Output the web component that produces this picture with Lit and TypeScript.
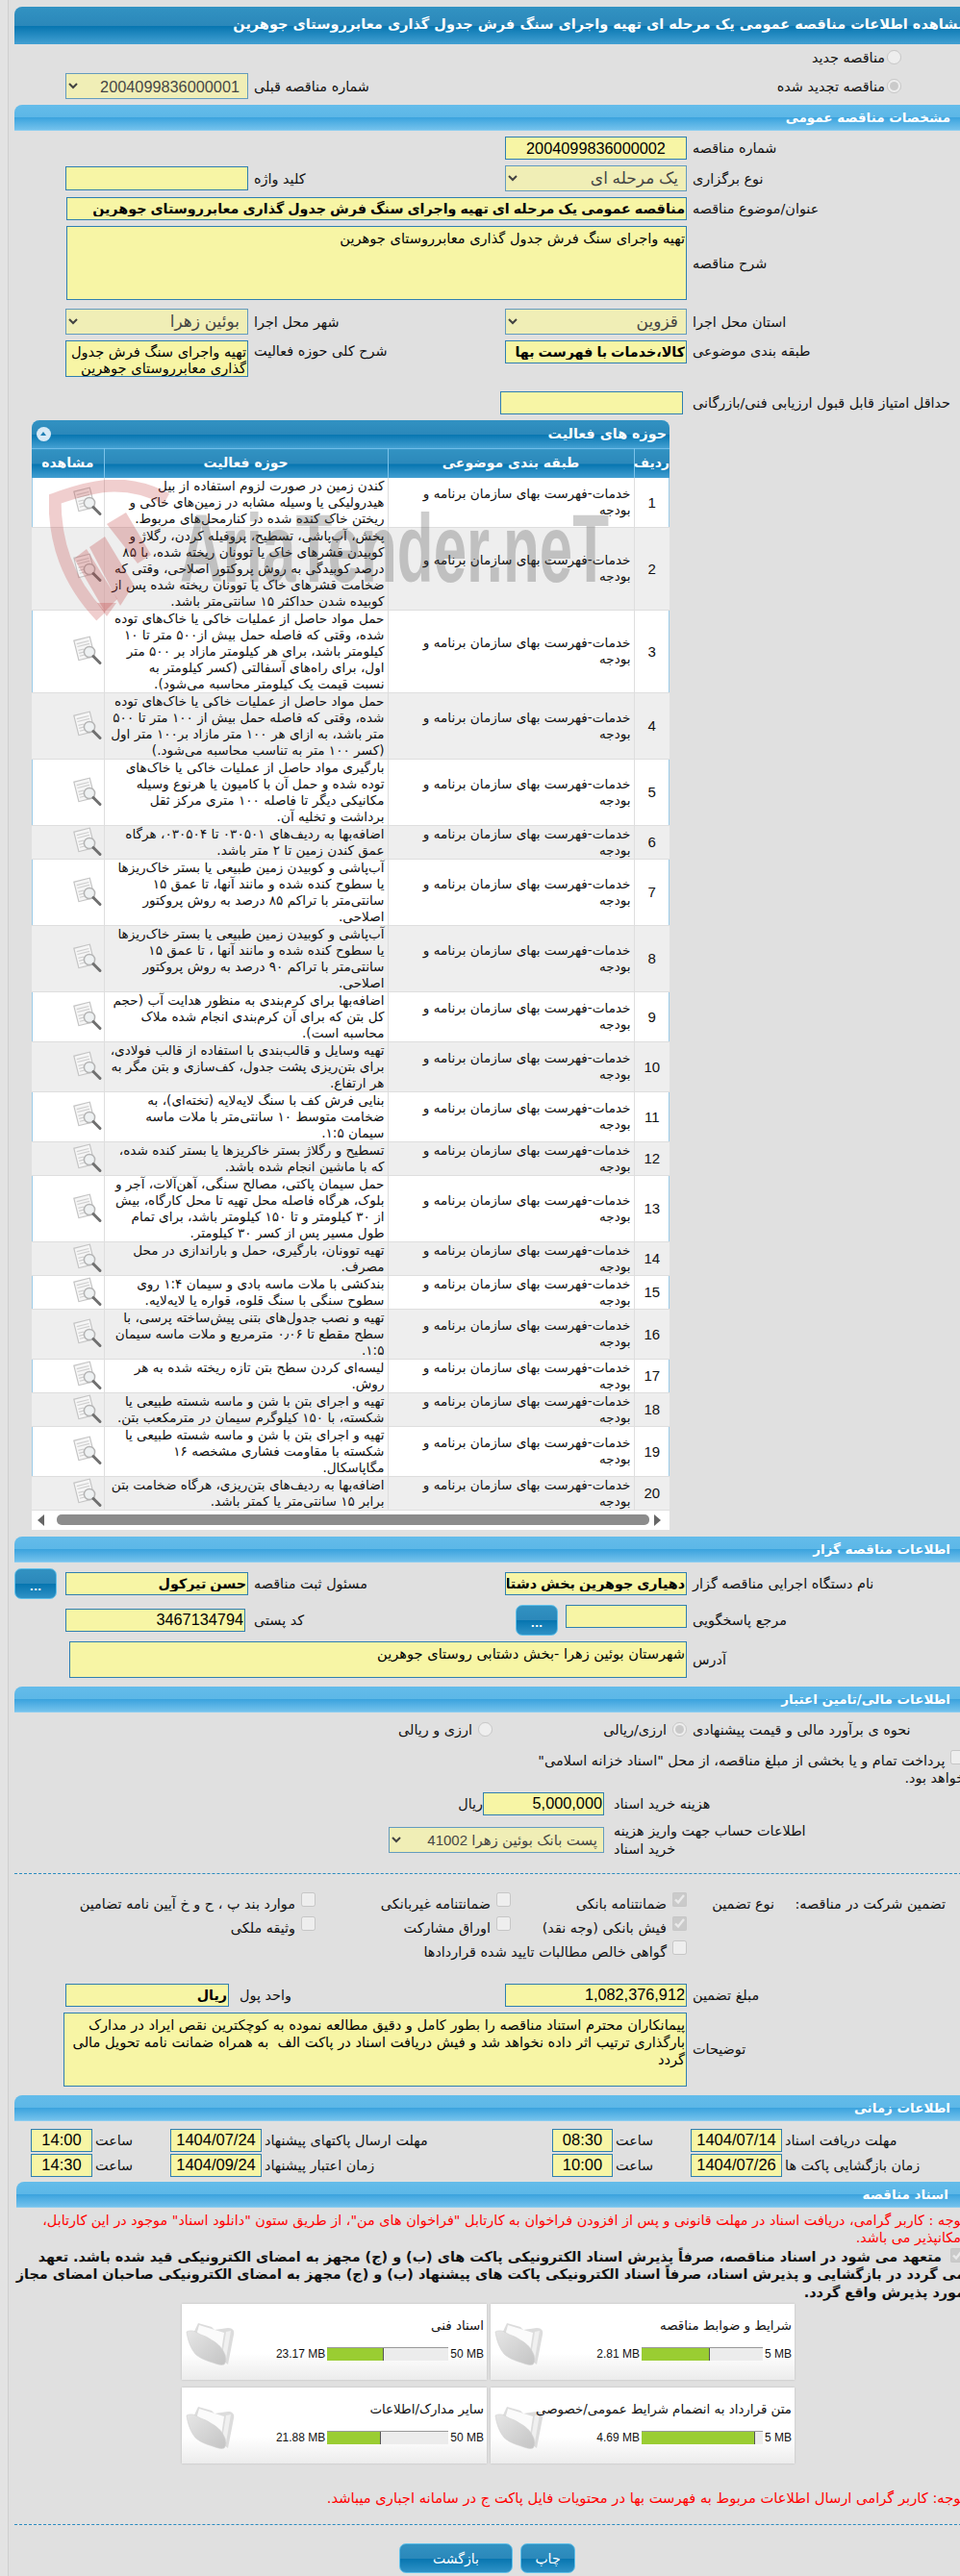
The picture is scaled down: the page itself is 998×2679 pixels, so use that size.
import { LitElement, html, css, svg } from "lit";
import { customElement } from "lit/decorators.js";

const ROWS: string[][] = [
  ["کندن زمین در صورت لزوم استفاده از بیل", "هیدرولیکی یا  وسیله مشابه در زمین‌های خاکی و", "ریختن خاک کنده شده در کنارمحل‌های مربوط."],
  ["پخش، آب‌پاشی، تسطیح، پروفیله کردن، رگلاژ و", "کوبیدن قشرهای خاک یا توونان ریخته شده، با ۸۵", "درصد کوبیدگی به روش پروکتور اصلاحی، وقتی که", "ضخامت قشرهای خاک یا توونان ریخته شده پس از", "کوبیده شدن حداکثر ۱۵ سانتی‌متر باشد."],
  ["حمل مواد حاصل از عملیات خاکی یا خاک‌های توده", "شده، وقتی  که فاصله حمل بیش از۵۰۰ متر تا ۱۰", "کیلومتر باشد، برای هر کیلومتر مازاد بر ۵۰۰  متر", "اول، برای راه‌های آسفالتی (کسر کیلومتر به", "نسبت قیمت یک کیلومتر محاسبه می‌شود)."],
  ["حمل مواد حاصل از عملیات خاکی یا خاک‌های توده", "شده، وقتی که فاصله حمل بیش از ۱۰۰ متر تا ۵۰۰", "متر باشد، به ازای هر ۱۰۰ متر مازاد بر۱۰۰ متر اول", "(کسر ۱۰۰ متر به تناسب محاسبه می‌شود.)"],
  ["بارگیری مواد حاصل از عملیات خاکی یا خاک‌های", "توده شده و  حمل آن با کامیون یا هرنوع وسیله", "مکانیکی دیگر تا فاصله ۱۰۰ متری مرکز ثقل", "برداشت و تخلیه آن."],
  ["اضافه‌بها به ردیف‌های ۰۳۰۵۰۱ تا ۰۳۰۵۰۴، هرگاه", "عمق کندن  زمین تا ۲ متر باشد."],
  ["آب‌پاشی و کوبیدن زمین طبیعی یا بستر خاک‌ریزها", "یا سطوح کنده شده و مانند آنها، تا عمق ۱۵", "سانتی‌متر با تراکم ۸۵ درصد به روش پروکتور", "اصلاحی."],
  ["آب‌پاشی و کوبیدن زمین طبیعی یا بستر خاک‌ریزها", "یا سطوح کنده شده و مانند آنها ، تا عمق ۱۵", "سانتی‌متر با تراکم ۹۰ درصد به روش پروکتور", "اصلاحی."],
  ["اضافه‌بها برای کرم‌بندی به منظور هدایت آب (حجم", "کل بتن که برای آن کرم‌بندی انجام شده ملاک", "محاسبه است)."],
  ["تهیه وسایل و قالب‌بندی با استفاده از قالب فولادی،", "برای بتن‌ریزی پشت جدول، کف‌سازی و بتن مگر به", "هر ارتفاع."],
  ["بنایی فرش کف با سنگ لایه‌لایه (تخته‌ای)، به", "ضخامت متوسط ۱۰ سانتی‌متر با ملات ماسه", "سیمان ۱:۵."],
  ["تسطیح و رگلاژ بستر خاکریزها یا بستر کنده شده،", "که با ماشین انجام شده باشد."],
  ["حمل سیمان پاکتی، مصالح سنگی، آهن‌آلات، آجر و", "بلوک، هرگاه فاصله محل تهیه تا محل کارگاه، بیش", "از ۳۰ کیلومتر و تا ۱۵۰ کیلومتر باشد، برای تمام", "طول مسیر پس از کسر ۳۰ کیلومتر."],
  ["تهیه توونان، بارگیری، حمل و باراندازی در محل", "مصرف."],
  ["بندکشی با ملات ماسه بادی و سیمان ۱:۴ روی", "سطوح سنگی با سنگ قلوه، قواره یا لایه‌لایه."],
  ["تهیه و نصب جدول‌های بتنی پیش‌ساخته پرسی، با", "سطح مقطع تا ۰٫۰۶ مترمربع و ملات ماسه سیمان", "۱:۵."],
  ["لیسه‌ای کردن سطح بتن تازه ریخته شده به هر", "روش."],
  ["تهیه و اجرای بتن با شن و ماسه شسته طبیعی یا", "شکسته، با ۱۵۰ کیلوگرم سیمان در مترمکعب بتن."],
  ["تهیه و اجرای بتن با شن و ماسه شسته طبیعی یا", "شکسته با مقاومت فشاری مشخصه ۱۶", "مگاپاسکال."],
  ["اضافه‌بها به ردیف‌های بتن‌ریزی، هرگاه ضخامت بتن", "برابر ۱۵ سانتی‌متر یا کمتر باشد."],
];

const CARDS = [
  { t: "اسناد فنی", v: "23.17 MB", m: "50 MB", p: 46.3 },
  { t: "شرایط و ضوابط مناقصه", v: "2.81 MB", m: "5 MB", p: 56.2 },
  { t: "سایر مدارک/اطلاعات", v: "21.88 MB", m: "50 MB", p: 43.8 },
  { t: "متن قرارداد به انضمام شرایط عمومی/خصوصی", v: "4.69 MB", m: "5 MB", p: 93.8 },
];

const viewIcon = svg`<svg class="vi" viewBox="0 0 32 32" width="32" height="32">
  <g transform="rotate(-14 12 13)">
    <rect x="4" y="3" width="17" height="21" fill="#f6f6f6" stroke="#c4c4c4" stroke-width="1.2"/>
    <path d="M6 7h13M6 10h13M6 14h6M6 17h6M6 20h9" stroke="#cfcfcf" stroke-width="1.2"/>
  </g>
  <circle cx="18" cy="17" r="5.6" fill="#eef1f2" stroke="#b4b4b4" stroke-width="1.5"/>
  <path d="M22 21.5l7 7" stroke="#707070" stroke-width="3" stroke-linecap="round"/>
</svg>`;

const folderIcon = svg`<svg class="fo" viewBox="0 0 53 48" width="53" height="48">
  <defs><linearGradient id="fg" x1="0" y1="0" x2="1" y2="1"><stop offset="0" stop-color="#e6e6e6"/><stop offset="1" stop-color="#c4c4c4"/></linearGradient></defs>
  <path d="M14 3l14 4 3 3 14-2c5 0 7 3 6 7l-6 31-38-28z" fill="#dcdcdc"/>
  <path d="M15 5l26 8-4 26L12 16z" fill="#fbfbfb"/>
  <path d="M43 12l5-1-5 29-4-3z" fill="#f0f0f0"/>
  <path d="M2 12c4-2 8-1 11 1 4 3 9 3 14 7 5 3 11 6 15 16 1 3 1 8-1 10-3 1-7 0-12-2-7-2-14-5-18-9C6 29 3 20 2 12z" fill="url(#fg)" stroke="#d0d0d0" stroke-width=".6"/>
</svg>`;

const watermark = svg`<svg class="wm" viewBox="0 0 600 150" width="600" height="150">
  <g fill="none" stroke="#c23a3a" stroke-opacity=".25" stroke-width="13">
    <path d="M122 20C100 8 82 6 68 6 48 6 28 12 6 20c0 44 12 84 48 122"/>
  </g>
  <g fill="#c23a3a" fill-opacity=".27">
    <path d="M60 46l20-12 26 44-14 9z"/>
    <path d="M42 70l16-11 30 50-14 22z"/>
    <path d="M26 82l13-10 32 52-13 13z"/>
    <path d="M50 128h20l-10 14z"/>
  </g>
  <text x="136" y="106" font-family="Liberation Sans, sans-serif" font-weight="700" font-size="100" textLength="446" lengthAdjust="spacingAndGlyphs" fill="#3c3c3c" fill-opacity=".26">AriaTender.neT</text>
</svg>`;

@customElement("app-root")
export class AppRoot extends LitElement {
  static styles = css`
    :host { display: block; width: 998px; height: 2679px; overflow: hidden; background: #e0e0e0; }
    .page {
      width: 1010px; height: 2679px; box-sizing: border-box; position: relative;
      font-family: "DejaVu Sans", sans-serif; font-size: 14.4px; color: #111; direction: rtl;
      background: linear-gradient(to right, #e3e3e3 0, #e3e3e3 8px, #cfcfcf 8px, #cfcfcf 9px, #e0e0e0 9px);
      padding-top: 7px;
    }
    .main { margin-left: 15px; }
    .title, .sec, .ph, .th {
      color: #fff; font-weight: 700;
    }
    .title {
      height: 39px; box-sizing: border-box; line-height: 37px; padding-right: 5px; white-space: nowrap; font-size: 14.5px;
      border-radius: 8px 8px 0 0; background: linear-gradient(#3292c2 0, #2b88ba 50%, #0675b0 51%, #43a0d2 100%);
    }
    .sec {
      height: 27px; box-sizing: border-box; line-height: 26px; padding-right: 22px; font-size: 13.5px; white-space: nowrap;
      border-radius: 8px 8px 0 0; background: linear-gradient(#64bcea 0, #5cb7e7 50%, #3ba3de 51%, #74c2ec 100%);
      border-bottom: 1px solid #8ccdf0;
    }
    .sec.s1 { margin-top: 6px; }
    .sec.s4 { margin-left: 2px; padding-right: 24px; }
    .radio-a { height: 15px; margin-top: 6px; padding-right: 73px; display: flex; gap: 2px; align-items: center; }
    input[type="radio"], input[type="checkbox"] { width: 15px; height: 15px; margin: 0; flex: none; }
    .row {
      display: grid; direction: ltr; padding-left: 53px; margin-top: 6px; align-items: center;
      grid-template-columns: 190px 267px 189px 1fr;
    }
    .row.btns { padding-left: 0; grid-template-columns: 53px 190px 267px 189px 1fr; }
    .row.top { align-items: start; }
    .l { direction: rtl; text-align: left; padding-left: 6px; white-space: nowrap; line-height: 18px; }
    .l.t6 { padding-top: 2px; }
    .rad-r { grid-column: 3 / 5; direction: rtl; padding-right: 73px; display: flex; gap: 2px; align-items: center; }
    .f {
      box-sizing: border-box; height: 24px; width: 100%; border: 1px solid #2f7fb0; background: #f7f5a5; color: #000;
      font-family: "Liberation Sans", "DejaVu Sans", sans-serif; font-size: 16.3px; direction: rtl; padding: 0 1px; margin: 0;
      border-radius: 0; outline: none; display: block;
    }
    .f.h25 { height: 25px; }
    .f.num { text-align: center; }
    .f.b { font-weight: 700; font-size: 14.3px; }
    select.f { height: 27px; padding: 0 4px; font-size: 17px; }
    select.f.n { font-size: 16.3px; }
    select.f.acct { font-size: 15px; padding: 0 2px; }
    textarea.f { resize: none; font-size: 14.6px; line-height: 18px; padding: 3px 1px; overflow: hidden; white-space: pre-wrap; font-family: "DejaVu Sans", sans-serif; }
    textarea.f.tight { line-height: 17px; padding-top: 2px; }
    .span3 { grid-column: 1 / 4; }
    .ml1 { margin-left: 1px; width: calc(100% - 1px); }
    .ml-5 { margin-left: -5px; width: 190px; }
    .ml4 { margin-left: 4px; width: calc(100% - 4px); }
    .ml-2 { margin-left: -2px; width: calc(100% + 2px); }
    .h77 { height: 77px; }
    .h38 { height: 38px; }
    .w187 { width: 187px; }
    .w170 { width: 170px; }
    .m9 { margin-top: 9px; }
    .m15 { margin-top: 15px; }
    .btn {
      box-sizing: border-box; height: 32px; width: 44px; border: 1px solid #5fc0ea; border-radius: 7px; padding: 0; font: inherit; color: #fff;
      background: linear-gradient(#3292c2 0, #2b88ba 50%, #0675b0 51%, #2f92c6 100%); font-weight: 400; text-align: center;
    }
    .btn.dots { font-weight: 700; font-size: 11px; line-height: 38px; }
    .pair { display: flex; gap: 8px; justify-content: flex-end; align-items: flex-start; }
    .pair .f { width: 126px; }

    .panel {
      margin: 6px 314px 0 0; width: 663px; position: relative; border-radius: 8px 8px 0 0; background: #fff; overflow: hidden;
      box-shadow: inset 1px 0 #9ccbe8, inset -1px 0 #9ccbe8;
    }
    .ph {
      height: 29px; box-sizing: border-box; line-height: 29px; padding-right: 3px; font-size: 14.3px; position: relative;
      background: linear-gradient(#3292c2 0, #2b88ba 50%, #0675b0 51%, #43a0d2 100%);
    }
    .coll {
      position: absolute; left: 5px; top: 7px; width: 15px; height: 15px; border-radius: 50%; background: #d8eaf6;
    }
    .coll::after {
      content: ""; position: absolute; left: 4px; top: 5px; border-left: 3.5px solid transparent; border-right: 3.5px solid transparent; border-bottom: 4px solid #1f7fb5;
    }
    table { border-collapse: collapse; table-layout: fixed; width: 663px; direction: rtl; }
    .th {
      height: 30px; padding: 0 0 2px; font-size: 14px; text-align: center; border-left: 1px solid #7cc3ea; white-space: nowrap;
      background: linear-gradient(#3292c2 0, #2b88ba 50%, #0675b0 51%, #43a0d2 100%); box-sizing: border-box;
      border-top: 1px solid #6fbce8;
    }
    .th:last-child { border-left: 0; }
    td { border-left: 1px solid #dedede; border-bottom: 1px solid #dedede; padding: 0; vertical-align: middle; box-sizing: border-box; }
    td:last-child { border-left: 0; }
    tr.alt td { background: #eeeeee; }
    .n0 { text-align: center; font-family: "Liberation Sans", sans-serif; font-size: 15px; }
    .tx { line-height: 17px; white-space: nowrap; padding: 0 3px; text-align: right; font-size: 13.6px; }
    .vc { text-align: left; direction: ltr; padding-left: 42px; height: 17px; }
    .vi { display: block; }
    .wm { position: absolute; left: 18px; top: 62px; pointer-events: none; direction: ltr; }
    .sb { height: 20px; position: relative; background: #fff; display: flex; direction: ltr; align-items: center; padding: 0 9px 0 6px; gap: 5px; }
    .tri-r { width: 0; height: 0; border-top: 6px solid transparent; border-bottom: 6px solid transparent; flex: none; border-left: 7px solid #666; }
    .tri-r.flip { transform: scaleX(-1); }
    .thumb { flex: 1; height: 11px; background: #8c8c8c; border-radius: 5px; margin: 0 0 0 8px; }

    .sec.s2 { margin-top: 7px; }
    .radiorow { display: grid; direction: ltr; padding-left: 53px; margin-top: 9px; grid-template-columns: 646px 1fr; align-items: center; height: 16px; }
    .rc { direction: rtl; display: flex; align-items: center; }
    .rc > div { display: flex; align-items: center; gap: 6px; width: 202px; white-space: nowrap; }
    .p1 { margin-top: 14px; padding-right: 7px; line-height: 18px; white-space: nowrap; }
    .p1 input { vertical-align: 1px; margin: 0 0 0 1px; }
    .cost { display: grid; direction: ltr; padding-left: 463px; margin-top: 6px; grid-template-columns: 24px 126px 1fr; align-items: center; }
    .cost .rl { text-align: left; direction: rtl; }
    .acc { display: grid; direction: ltr; padding-left: 389px; margin-top: 7px; grid-template-columns: 224px 1fr; align-items: center; height: 27px; }
    .acc .l { padding-left: 10px; line-height: 19px; }
    .cost .l { padding-left: 10px; }
    .dash { border-top: 1px dashed #2b8bc0; height: 0; }
    .dash.a { margin-top: 26px; }
    .dash.b { margin-top: 18px; }
    .guar { display: grid; padding-right: 27px; margin-top: 19px; row-gap: 3px; grid-template-columns: 178px 91px 183px 203px 1fr; }
    .g { display: flex; gap: 6px; align-items: flex-start; white-space: nowrap; height: 22px; }
    .g span { line-height: 20px; margin-top: 2px; }
    .gh { padding-top: 2px; line-height: 20px; white-space: nowrap; }
    .amount { margin-top: 23px; }
    .l-unit { margin-left: -15px; }
    .times { display: grid; direction: ltr; padding-left: 17px; margin-top: 2px; grid-template-columns: 64px 81px 95px 302px 63px 81px 95px 1fr; align-items: center; }
    .times.first { margin-top: 8px; }
    .times .l { padding-left: 3px; }
    .times .f { font-size: 16.5px; }
    .sec.s4 { margin-top: 5px; }
    .red { color: #f00; margin-top: 4px; padding-right: 7px; line-height: 18px; white-space: nowrap; }
    .bold { margin-top: 2px; padding-right: 7px; line-height: 18.5px; white-space: nowrap; font-weight: 700; font-size: 14.4px; }
    .bold input { margin: 0 0 0 4px; vertical-align: -1px; }
    .cards { margin: 3px 0 0 174px; display: grid; grid-template-columns: 317px 316px; gap: 8px 4px; direction: ltr; }
    .card {
      height: 79px; box-sizing: border-box; background: linear-gradient(#fff 0, #fff 65%, #ececec 100%);
      box-shadow: 0 0 2px rgba(0, 0, 0, .18); display: grid; grid-template-columns: 59px minmax(0, 1fr); position: relative;
    }
    .fo { margin: 17px 0 0 3px; }
    .ct { padding: 14px 3px 0 0; direction: rtl; font-size: 13.4px; min-width: 0; }
    .ct .tt { line-height: 18px; white-space: nowrap; }
    .pr { display: flex; direction: ltr; justify-content: flex-end; align-items: center; gap: 2px; margin-top: 13px; font-family: "Liberation Sans", sans-serif; font-size: 12px; }
    .bar { width: 126px; height: 14px; box-sizing: border-box; background: #ececec; border-top: 1px solid #999; }
    .fill { height: 13px; background: #9acd32; border-right: 1px solid #555; box-sizing: border-box; }
    .note { color: #f00; margin-top: 27px; line-height: 18px; padding-right: 7px; white-space: nowrap; font-size: 14.7px; }
    .actions { display: flex; direction: ltr; gap: 8px; margin: 19px 0 0 400px; }
    .actions .btn { height: 31px; font-size: 14px; }
    .actions .w118 { width: 118px; }
    .actions .w57 { width: 57px; }
  `;

  private guar(t: string, on = false) {
    return html`<div class="g"><input type="checkbox" disabled ?checked=${on} /><span>${t}</span></div>`;
  }

  render() {
    const sel = (t: string, extra = "") => html`<select disabled class="f ${extra}"><option>${t}</option></select>`;
    return html`
      <div class="page"><div class="main">
        <div class="title">مشاهده اطلاعات مناقصه عمومی یک مرحله ای تهیه واجرای سنگ فرش جدول گذاری معابرروستای جوهرین</div>
        <div class="radio-a"><input type="radio" name="k" disabled /><span>مناقصه جدید</span></div>
        <div class="row m9">
          ${sel("2004099836000001", "n")}
          <div class="l">شماره مناقصه قبلی</div>
          <div class="rad-r"><input type="radio" name="k" disabled checked /><span>مناقصه تجدید شده</span></div>
        </div>
        <div class="sec s1">مشخصات مناقصه عمومی</div>
        <div class="row"><span></span><span></span><input class="f num" readonly value="2004099836000002" /><div class="l">شماره مناقصه</div></div>
        <div class="row">
          <input class="f h25" readonly />
          <div class="l">کلید واژه</div>
          ${sel("یک مرحله ای")}
          <div class="l">نوع برگزاری</div>
        </div>
        <div class="row">
          <input class="f b span3 ml1" readonly value="مناقصه عمومی یک مرحله ای تهیه واجرای سنگ فرش جدول گذاری معابرروستای جوهرین" />
          <div class="l">عنوان/موضوع مناقصه</div>
        </div>
        <div class="row">
          <textarea class="f span3 ml1 h77" readonly>تهیه واجرای سنگ فرش جدول گذاری معابرروستای جوهرین</textarea>
          <div class="l">شرح مناقصه</div>
        </div>
        <div class="row m9">
          ${sel("بوئین زهرا")}
          <div class="l">شهر محل اجرا</div>
          ${sel("قزوین")}
          <div class="l">استان محل اجرا</div>
        </div>
        <div class="row top">
          <textarea class="f h38 tight" readonly>تهیه واجرای سنگ فرش جدول گذاری معابرروستای جوهرین</textarea>
          <div class="l t6">شرح کلی حوزه فعالیت</div>
          <input class="f b" readonly value="کالا،خدمات با فهرست بها" />
          <div class="l t6">طبقه بندی موضوعی</div>
        </div>
        <div class="row m15"><span></span><span></span><input class="f ml-5" readonly /><div class="l">حداقل امتیاز قابل قبول ارزیابی فنی/بازرگانی</div></div>

        <div class="panel">
          <div class="ph">حوزه های فعالیت<span class="coll"></span></div>
          <table>
            <colgroup><col style="width:37px" /><col style="width:256px" /><col style="width:295px" /><col style="width:75px" /></colgroup>
            <thead><tr><th class="th">ردیف</th><th class="th">طبقه بندی موضوعی</th><th class="th">حوزه فعالیت</th><th class="th">مشاهده</th></tr></thead>
            <tbody>
              ${ROWS.map((lines, i) => html`<tr class=${i % 2 ? "alt" : ""}>
                <td class="n0">${i + 1}</td>
                <td class="tx">خدمات-فهرست بهای سازمان برنامه و<br />بودجه</td>
                <td class="tx">${lines.map((l, j) => html`${j ? html`<br />` : ""}${l}`)}</td>
                <td class="vc">${viewIcon}</td>
              </tr>`)}
            </tbody>
          </table>
          <div class="sb"><span class="tri-r flip"></span><div class="thumb"></div><span class="tri-r"></span></div>
          ${watermark}
        </div>

        <div class="sec s2">اطلاعات مناقصه گزار</div>
        <div class="row btns">
          <button class="btn dots">...</button>
          <input class="f b" readonly value="حسن تیرکول" />
          <div class="l">مسئول ثبت مناقصه</div>
          <input class="f b" readonly value="دهیاری جوهرین بخش دشتابی" />
          <div class="l">نام دستگاه اجرایی مناقصه گزار</div>
        </div>
        <div class="row">
          <input class="f w187" readonly value="3467134794" />
          <div class="l">کد پستی</div>
          <div class="pair"><button class="btn dots">...</button><input class="f" readonly /></div>
          <div class="l">مرجع پاسخگویی</div>
        </div>
        <div class="row">
          <textarea class="f span3 ml4 h38" readonly>شهرستان بوئین زهرا -بخش دشتابی روستای جوهرین</textarea>
          <div class="l">آدرس</div>
        </div>
        <div class="sec m9">اطلاعات مالی/تامین اعتبار</div>
        <div class="radiorow">
          <div class="rc"><div><input type="radio" name="c" disabled checked /><span>ارزی/ریالی</span></div><div><input type="radio" name="c" disabled /><span>ارزی و ریالی</span></div></div>
          <div class="l">نحوه ی برآورد مالی و قیمت پیشنهادی</div>
        </div>
        <div class="p1"><input type="checkbox" disabled /> پرداخت تمام و یا بخشی از مبلغ مناقصه، از محل "اسناد خزانه اسلامی"<br />خواهد بود.</div>
        <div class="cost">
          <div class="rl">ریال</div>
          <input class="f" readonly value="5,000,000" />
          <div class="l">هزینه خرید اسناد</div>
        </div>
        <div class="acc">
          <select disabled class="f acct"><option>پست بانک بوئین زهرا 41002</option></select>
          <div class="l">اطلاعات حساب جهت واریز هزینه<br />خرید اسناد</div>
        </div>
        <div class="dash a"></div>
        <div class="guar">
          <div class="gh">تضمین شرکت در مناقصه:</div>
          <div class="gh">نوع تضمین</div>
          ${this.guar("ضمانتنامه بانکی", true)}
          ${this.guar("ضمانتنامه غیربانکی")}
          ${this.guar("موارد بند پ ، ح و خ آیین نامه تضامین")}
          <span></span><span></span>
          ${this.guar("فیش بانکی (وجه نقد)", true)}
          ${this.guar("اوراق مشارکت")}
          ${this.guar("وثیقه ملکی")}
          <span></span><span></span>
          ${this.guar("گواهی خالص مطالبات تایید شده قراردادها")}
        </div>
        <div class="row amount">
          <input class="f b w170" readonly value="ریال" />
          <div class="l l-unit">واحد پول</div>
          <input class="f" readonly value="1,082,376,912" />
          <div class="l">مبلغ تضمین</div>
        </div>
        <div class="row">
          <textarea class="f span3 ml-2 h77" readonly>پیمانکاران محترم استناد مناقصه را بطور کامل و دقیق مطالعه نموده به کوچکترین نقص ایراد در مدارک بارگذاری ترتیب اثر داده نخواهد شد و فیش دریافت اسناد در پاکت الف  به همراه ضمانت نامه تحویل مالی گردد</textarea>
          <div class="l">توضیحات</div>
        </div>
        <div class="sec m9">اطلاعات زمانی</div>
        <div class="times first">
          <input class="f num" readonly value="14:00" /><div class="l">ساعت</div>
          <input class="f num" readonly value="1404/07/24" /><div class="l">مهلت ارسال پاکتهای پیشنهاد</div>
          <input class="f num" readonly value="08:30" /><div class="l">ساعت</div>
          <input class="f num" readonly value="1404/07/14" /><div class="l">مهلت دریافت اسناد</div>
        </div>
        <div class="times">
          <input class="f num" readonly value="14:30" /><div class="l">ساعت</div>
          <input class="f num" readonly value="1404/09/24" /><div class="l">زمان اعتبار پیشنهاد</div>
          <input class="f num" readonly value="10:00" /><div class="l">ساعت</div>
          <input class="f num" readonly value="1404/07/26" /><div class="l">زمان بازگشایی پاکت ها</div>
        </div>
        <div class="sec s4">اسناد مناقصه</div>
        <div class="red">توجه : کاربر گرامی، دریافت اسناد در مهلت قانونی و پس از افزودن فراخوان به کارتابل "فراخوان های من"، از طریق ستون "دانلود اسناد" موجود در این کارتابل،<br />امکانپذیر می باشد.</div>
        <div class="bold"><input type="checkbox" disabled checked /> متعهد می شود در اسناد مناقصه، صرفاً پذیرش اسناد الکترونیکی پاکت های (ب) و (ج) مجهز به امضای الکترونیکی قید شده باشد. تعهد<br />می گردد در بازگشایی و پذیرش اسناد، صرفاً اسناد الکترونیکی پاکت های پیشنهاد (ب) و (ج) مجهز به امضای الکترونیکی صاحبان امضای مجاز<br />مورد پذیرش واقع گردد.</div>
        <div class="cards">
          ${CARDS.map((c) => html`<div class="card">${folderIcon}<div class="ct">
            <div class="tt">${c.t}</div>
            <div class="pr"><span>${c.v}</span><div class="bar"><div class="fill" style="width:${c.p}%"></div></div><span>${c.m}</span></div>
          </div></div>`)}
        </div>
        <div class="note">توجه: کاربر گرامی ارسال اطلاعات مربوط به فهرست بها در محتویات فایل پاکت ج در سامانه اجباری میباشد.</div>
        <div class="dash b"></div>
        <div class="actions"><button class="btn w118">بازگشت</button><button class="btn w57">چاپ</button></div>
      </div></div>
    `;
  }
}
